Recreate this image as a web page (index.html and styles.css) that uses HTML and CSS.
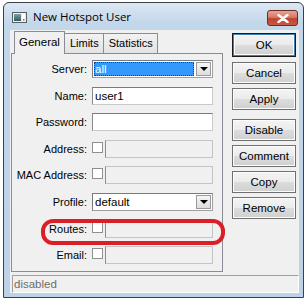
FILE: index.html
```html
<!DOCTYPE html>
<html>
<head>
<meta charset="utf-8">
<link rel="stylesheet" href="styles.css">
</head>
<body>
<div class="window">
  <div class="titlebar">
    <svg class="appicon" width="15" height="11" viewBox="0 0 15 11">
      <defs>
        <linearGradient id="ig" x1="0" y1="0" x2="0" y2="1">
          <stop offset="0" stop-color="#7fa0a8"/>
          <stop offset="1" stop-color="#2f5a5e"/>
        </linearGradient>
      </defs>
      <rect x="0.5" y="0.5" width="14" height="10" fill="#e8eef0" stroke="#5a5f66"/>
      <rect x="2" y="2" width="7" height="7" fill="url(#ig)"/>
      <rect x="10" y="2" width="3" height="7" fill="#ffffff"/>
      <rect x="11" y="7" width="1.5" height="1.5" fill="#c04040"/>
    </svg>
    <span class="title">New Hotspot User</span>
    <div class="closebtn">
      <svg width="12" height="9" viewBox="0 0 12 9">
        <path d="M1.5 1 L10.5 8 M10.5 1 L1.5 8" stroke="#ffffff" stroke-width="2.4" stroke-linecap="round"/>
      </svg>
    </div>
  </div>
  <div class="client">
    <div class="main">
      <div class="tabsection">
        <div class="tabstrip">
          <div class="tab active">General</div>
          <div class="tab">Limits</div>
          <div class="tab">Statistics</div>
        </div>
        <div class="panel">
          <div class="form">
            <label class="lbl">Server:</label>
            <div class="combo focus">
              <div class="combo-text"><span class="sel">all</span></div>
              <div class="combo-btn"><span class="arrow"></span></div>
            </div>

            <label class="lbl">Name:</label>
            <div class="textbox">user1</div>

            <label class="lbl">Password:</label>
            <div class="textbox"></div>

            <label class="lbl">Address:</label>
            <div class="chkfield"><span class="chk"></span><div class="textbox disabled"></div></div>

            <label class="lbl">MAC Address:</label>
            <div class="chkfield"><span class="chk"></span><div class="textbox disabled"></div></div>

            <label class="lbl">Profile:</label>
            <div class="combo">
              <div class="combo-text">default</div>
              <div class="combo-btn"><span class="arrow"></span></div>
            </div>

            <label class="lbl">Routes:</label>
            <div class="chkfield"><span class="chk"></span><div class="textbox disabled"></div></div>

            <label class="lbl">Email:</label>
            <div class="chkfield"><span class="chk"></span><div class="textbox disabled"></div></div>
          </div>
          <div class="highlight"></div>
        </div>
      </div>
      <div class="buttons">
        <div class="btn default">OK</div>
        <div class="btn">Cancel</div>
        <div class="btn">Apply</div>
        <div class="btn gap">Disable</div>
        <div class="btn">Comment</div>
        <div class="btn">Copy</div>
        <div class="btn">Remove</div>
      </div>
    </div>
    <div class="status">disabled</div>
  </div>
</div>
</body>
</html>
```

FILE: styles.css
```css
* { box-sizing: border-box; }
html, body { margin: 0; padding: 0; background: #ffffff; }
body {
  width: 308px;
  height: 302px;
  overflow: hidden;
  font-family: "Liberation Sans", Arial, sans-serif;
  font-size: 11px;
  color: #000;
}
.window {
  margin: 2px 0 0 3px;
  width: 301px;
  height: 296px;
  border: 1px solid #3b4047;
  border-radius: 6px 6px 0 0;
  background: linear-gradient(to bottom, #dce7f3 0px, #c3d7eb 20px, #bdd2e8 100%);
  display: flex;
  flex-direction: column;
}
.titlebar {
  height: 27px;
  display: flex;
  align-items: center;
  padding-left: 8px;
  position: relative;
}
.appicon { margin-top: 1px; }
.title {
  font-family: "Open Sans", "Liberation Sans", sans-serif;
  font-size: 11.5px;
  margin-left: 6px;
  color: #000;
}
.closebtn {
  position: absolute;
  right: 5px;
  top: 7px;
  width: 31px;
  height: 16px;
  border: 1px solid #6e2a24;
  border-radius: 3px;
  background: linear-gradient(to bottom, #e8a392 0%, #d67a66 45%, #c0432e 55%, #c75a44 100%);
  display: flex;
  align-items: center;
  justify-content: center;
}
.client {
  margin: 0 4px 4px 6px;
  flex: 1;
  background: #f0f0f0;
  display: flex;
  flex-direction: column;
}
.main {
  display: flex;
  align-items: flex-start;
}
.tabsection {
  margin-left: 1px;
  margin-top: 1px;
  width: 212px;
  position: relative;
}
.tabstrip {
  display: flex;
  height: 22px;
  padding-left: 3px;
  align-items: flex-end;
  position: relative;
  z-index: 2;
}
.tab {
  height: 20px;
  padding: 0 4px 0 5px;
  border: 1px solid #898c95;
  border-bottom: none;
  background: linear-gradient(to bottom, #f2f2f2, #e3e3e3);
  margin-left: -1px;
  line-height: 19px;
  font-size: 11px;
}
.tab.active {
  height: 23px;
  margin-bottom: -1px;
  background: #f0f0f0;
  padding: 0 4px 0 4px;
  margin-left: 0;
  line-height: 21px;
  font-size: 11.5px;
  position: relative;
  z-index: 3;
}
.panel {
  position: relative;
  height: 219px;
  border: 1px solid #898c95;
  background: #f0f0f0;
  padding-top: 6px;
}
.form {
  display: grid;
  grid-template-columns: 75px 121px;
  column-gap: 5px;
  row-gap: 8.6px;
  grid-auto-rows: 18px;
}
.lbl {
  text-align: right;
  line-height: 18px;
  white-space: nowrap;
}
.textbox {
  height: 18px;
  background: #fff;
  border: 1px solid #abadb3;
  border-color: #7a7a7a #c9c9c9 #c9c9c9 #8a8a8a;
  padding-left: 2px;
  line-height: 16px;
  font-size: 11.5px;
}
.textbox.disabled {
  background: #f0f0f0;
  border-color: #c4c4c4 #c4c4c4 #c4c4c4 #8c8c8c;
  flex: 1;
}
.chkfield {
  display: flex;
  align-items: flex-start;
  gap: 2px;
}
.chk {
  width: 11px;
  height: 11px;
  margin-top: 2px;
  background: #fff;
  border: 1px solid #8e8f8f;
  flex: none;
}
.combo {
  height: 18px;
  display: flex;
  background: #fff;
  border: 1px solid #7a7a7a;
  border-color: #7a7a7a #a0a0a0 #a0a0a0 #7a7a7a;
  padding: 1px;
}
.combo-text {
  flex: 1;
  line-height: 14px;
  padding-left: 1px;
  font-size: 11.5px;
}
.combo.focus .combo-text {
  background: #3399ff;
  color: #fff;
  outline: 1px dotted #1a3f7a;
  outline-offset: -1px;
}
.sel { color: #fff; }
.combo-btn {
  width: 15px;
  margin-left: 2px;
  border: 1px solid #9a9a9a;
  background: linear-gradient(to bottom, #f6f6f6, #dcdcdc);
  display: flex;
  align-items: center;
  justify-content: center;
}
.arrow {
  width: 0;
  height: 0;
  border-left: 4px solid transparent;
  border-right: 4px solid transparent;
  border-top: 4px solid #000;
}
.highlight {
  position: absolute;
  left: 29px;
  top: 165px;
  width: 184px;
  height: 26px;
  border: 4px solid #db1f28;
  border-radius: 12px;
  z-index: 5;
}
.buttons {
  margin-left: 9px;
  margin-top: 3px;
  width: 64px;
  display: flex;
  flex-direction: column;
  gap: 4px;
}
.btn {
  height: 22px;
  border: 1px solid #707070;
  background: linear-gradient(to bottom, #f4f4f4 0%, #ebebeb 50%, #dddddd 51%, #cfcfcf 100%);
  text-align: center;
  line-height: 20px;
  font-size: 11.5px;
  box-shadow: inset 0 0 0 1px #fcfcfc;
}
.btn.default {
  height: 24px;
  line-height: 22px;
  margin-bottom: 1px;
  border: 1px solid #1a1a1a;
  box-shadow: inset 0 0 0 1px #3c7fb1, inset 0 0 0 2px #fcfcfc;
}
.btn.gap { margin-top: 5px; }
.status {
  margin: 3px 0 0 2px;
  height: 18px;
  border: 1px solid #a0a0a0;
  border-color: #a0a0a0 #ffffff #ffffff #a0a0a0;
  color: #6d6d6d;
  padding-left: 1px;
  line-height: 16px;
  font-size: 11.5px;
}
```
